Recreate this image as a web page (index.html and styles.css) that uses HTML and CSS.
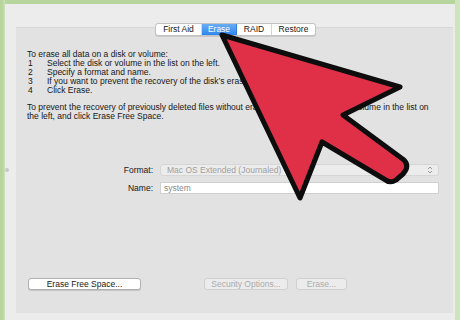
FILE: index.html
```html
<!DOCTYPE html>
<html>
<head>
<meta charset="utf-8">
<link rel="stylesheet" href="styles.css">
</head>
<body>
<div class="window">
  <span class="grip"></span>
  <div class="panel">
    <div class="tabs">
      <span class="tab">First Aid</span>
      <span class="tab active">Erase</span>
      <span class="tab">RAID</span>
      <span class="tab">Restore</span>
    </div>
    <div class="content">
      <p class="intro">To erase all data on a disk or volume:</p>
      <ol class="steps">
        <li><span class="num">1</span><span>Select the disk or volume in the list on the left.</span></li>
        <li><span class="num">2</span><span>Specify a format and name.</span></li>
        <li><span class="num">3</span><span>If you want to prevent the recovery of the disk’s erased data, click Security Options.</span></li>
        <li><span class="num">4</span><span>Click Erase.</span></li>
      </ol>
      <p class="para">To prevent the recovery of previously deleted files without erasing the volume, select a volume in the list on<br>the left, and click Erase Free Space.</p>
      <div class="form">
        <label class="lbl">Format:</label>
        <div class="popup"><span>Mac OS Extended (Journaled)</span>
          <svg class="updown" width="6" height="8" viewBox="0 0 6 8"><path d="M1 3 L3 1 L5 3 M1 5 L3 7 L5 5" fill="none" stroke="#9a9a9a" stroke-width="1"/></svg>
        </div>
        <label class="lbl">Name:</label>
        <div class="field">system</div>
      </div>
      <div class="buttons">
        <span class="btn">Erase Free Space...</span>
        <span class="spacer"></span>
        <span class="btn disabled sec">Security Options...</span>
        <span class="btn disabled er">Erase...</span>
      </div>
    </div>
  </div>
  <svg class="arrow" width="460" height="320" viewBox="0 0 460 320">
    <path d="M222 35 L400 87 L343 115 L404 160 Q410 166 403 174 L396 180 Q390 184 384 179 L322 142 L300 198 Z" fill="#e03048" stroke="#0d0d0d" stroke-width="5" stroke-linejoin="round"/>
  </svg>
</div>
</body>
</html>
```
FILE: styles.css
```css
html, body {
  margin: 0;
  padding: 0;
}
body {
  width: 460px;
  height: 320px;
  background: linear-gradient(to right, #b7d59c 0, #b9d69f 3px, #cfe3bd 5px);
  font-family: "Liberation Sans", Arial, sans-serif;
  font-size: 8.5px;
  color: #161616;
  overflow: hidden;
  position: relative;
}
.window {
  margin: 0 5px 0 5px;
  border-top: 4px solid #b7d59c;
  height: 320px;
  box-sizing: border-box;
  background: #ececec;
  padding: 23px 2px 7px 11px;
  display: flex;
  flex-direction: column;
}
.grip {
  position: absolute;
  left: 5px;
  top: 168px;
  width: 4px;
  height: 4px;
  border-radius: 50%;
  background: #c8c8c8;
}
.panel {
  flex: 1;
  background: #e2e2e2;
  border-top: 1px solid #d8d8d8;
  display: flex;
  flex-direction: column;
}
.tabs {
  align-self: flex-start;
  margin: -5px 0 0 139px;
  display: flex;
  height: 11px;
  background: #fff;
  border: 1px solid #c2c2c2;
  border-radius: 3px;
  box-shadow: 0 1px 0 #c9c9c9;
  overflow: hidden;
}
.tab {
  display: flex;
  align-items: center;
  justify-content: center;
  font-size: 8.5px;
  line-height: 11px;
  color: #161616;
  border-right: 1px solid #d6d6d6;
}
.tab:nth-child(1) { width: 45px; }
.tab:nth-child(2) { width: 34px; }
.tab:nth-child(3) { width: 34px; }
.tab:nth-child(4) { width: 43px; border-right: 0; }
.tab.active {
  background: linear-gradient(#6aacf5, #2f86ee);
  color: #fff;
  border-right-color: #2f7fdc;
}
.content {
  padding: 14px 11px 0 11px;
  display: flex;
  flex-direction: column;
  flex: 1;
}
p {
  margin: 0;
  line-height: 9px;
}
.steps {
  list-style: none;
  margin: 0;
  padding: 0 0 0 1px;
}
.steps li {
  display: grid;
  grid-template-columns: 19px 1fr;
  line-height: 9px;
  white-space: nowrap;
}
.para {
  margin-top: 8px;
  white-space: nowrap;
}
.form {
  margin-top: 43px;
  display: grid;
  grid-template-columns: 126px 279px;
  column-gap: 7px;
  row-gap: 6px;
  align-items: center;
}
.lbl {
  text-align: right;
  color: #161616;
}
.popup {
  height: 10px;
  background: #ececec;
  border: 1px solid #d6d6d6;
  border-radius: 3px;
  display: flex;
  align-items: center;
  justify-content: space-between;
  padding: 0 5px 0 6px;
  color: #a0a0a0;
}
.field {
  height: 10px;
  background: #fff;
  border: 1px solid #d0d0d0;
  padding: 0 3px;
  line-height: 10px;
  color: #8a8a8a;
}
.buttons {
  margin-top: auto;
  margin-bottom: 23px;
  display: flex;
  align-items: center;
}
.btn {
  height: 10px;
  line-height: 10px;
  border: 1px solid #b0b0b0;
  border-radius: 3px;
  background: #fff;
  text-align: center;
  color: #161616;
  box-shadow: 0 1px 0 #c4c4c4;
  width: 111px;
  margin-left: 1px;
}
.spacer {
  width: 62px;
}
.btn.disabled {
  background: #ececec;
  border-color: #d0d0d0;
  color: #ababab;
  box-shadow: none;
}
.btn.sec { width: 82px; }
.btn.er { width: 49px; margin-left: 8px; }
.arrow {
  position: absolute;
  left: 0;
  top: 0;
}
```
